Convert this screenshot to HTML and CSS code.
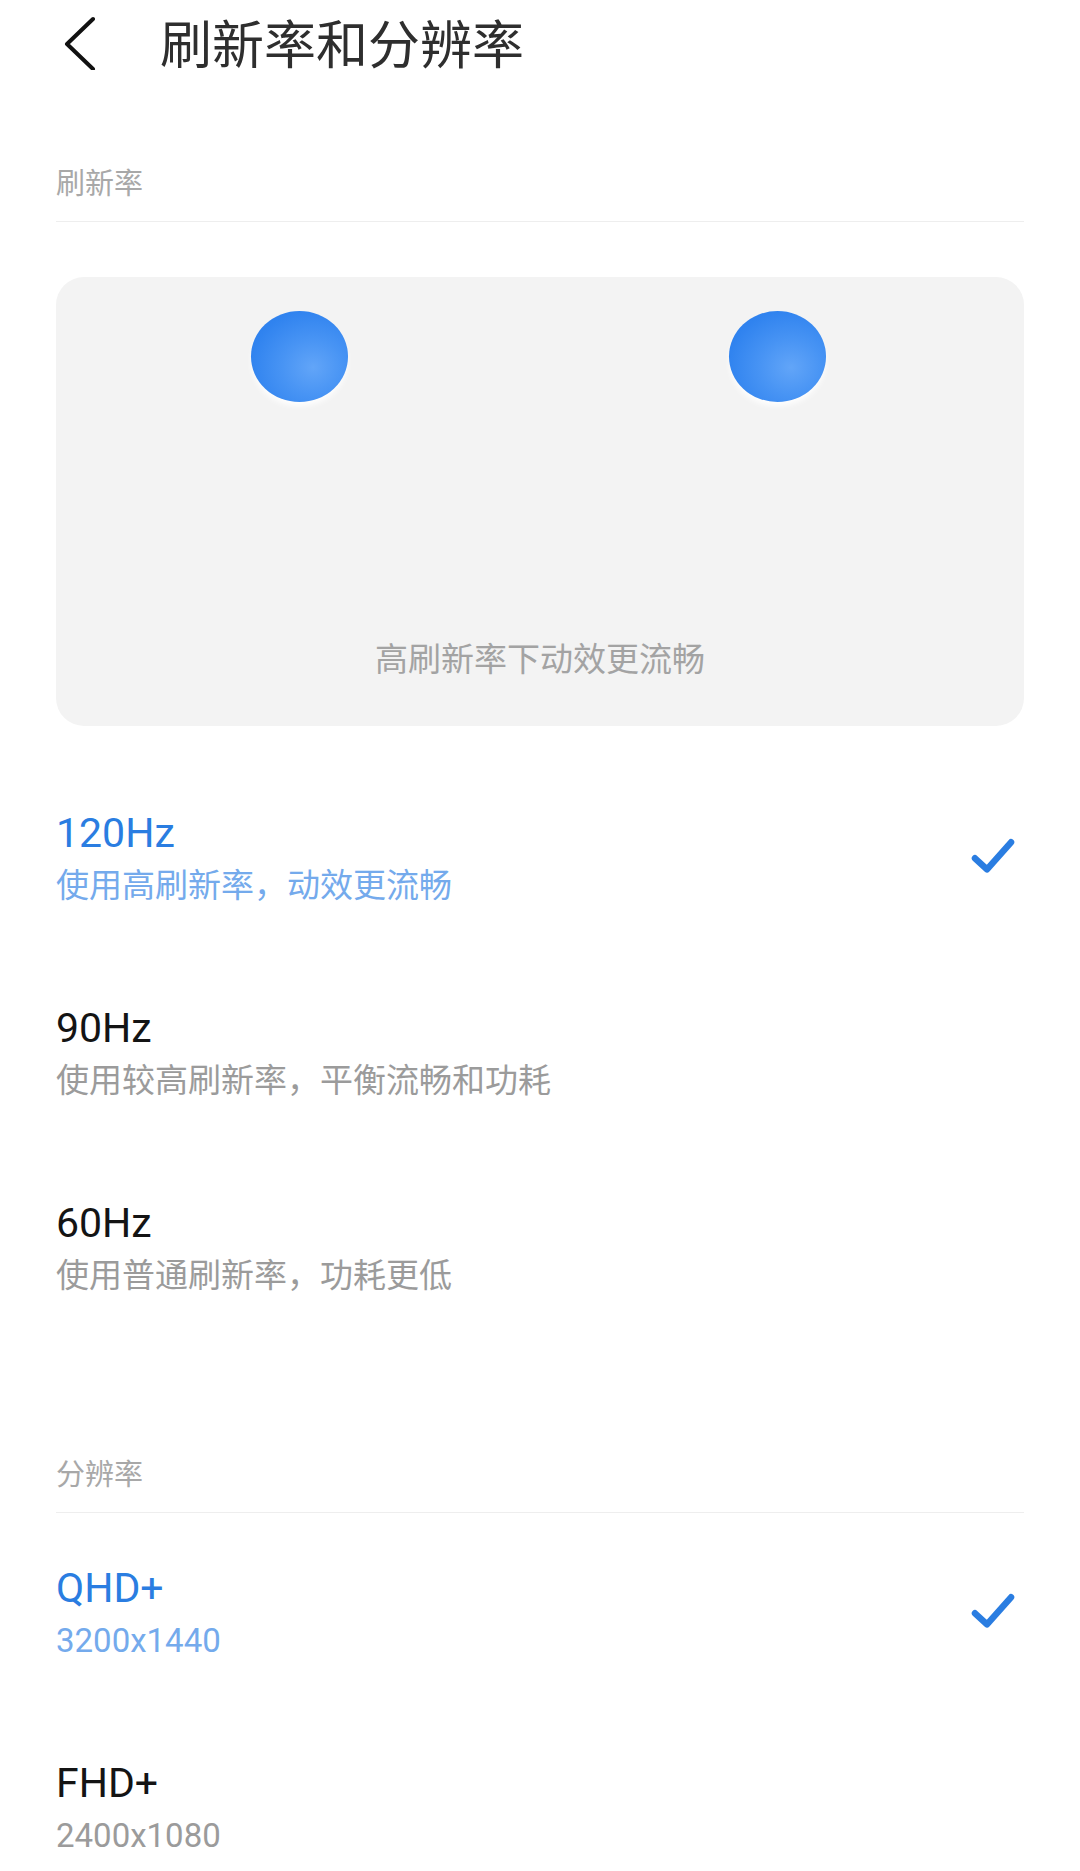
FILE: index.html
```html
<!DOCTYPE html>
<html lang="zh-CN">
<head>
	<meta charset="UTF-8">
	<title>刷新率和分辨率</title>
	<link rel="stylesheet" href="styles.css">
</head>
<body>
	<header class="topbar">
		<svg class="back" width="48" height="56" viewBox="0 0 48 56">
			<path d="M37 5 L11 30 L37 55" fill="none" stroke="#111" stroke-width="4" stroke-linecap="round" stroke-linejoin="round"/>
		</svg>
		<h1 class="title">刷新率和分辨率</h1>
	</header>

	<div class="group-title">刷新率</div>

	<div class="demo">
		<div class="balls">
			<div class="ball"></div>
			<div class="ball"></div>
		</div>
		<div class="demo-text">高刷新率下动效更流畅</div>
	</div>

	<ul class="list list-rate">
		<li class="row current">
			<div class="opt">
				<div class="opt-title">120Hz</div>
				<div class="opt-sub">使用高刷新率，动效更流畅</div>
			</div>
			<svg class="check" width="50" height="44" viewBox="0 0 50 44">
				<path d="M7 21.3 L19 32.3 L43 5.3" fill="none" stroke="#2a7de1" stroke-width="6.5" stroke-linecap="round" stroke-linejoin="round"/>
			</svg>
		</li>
		<li class="row">
			<div class="opt">
				<div class="opt-title">90Hz</div>
				<div class="opt-sub">使用较高刷新率，平衡流畅和功耗</div>
			</div>
		</li>
		<li class="row">
			<div class="opt">
				<div class="opt-title">60Hz</div>
				<div class="opt-sub">使用普通刷新率，功耗更低</div>
			</div>
		</li>
	</ul>

	<div class="group-title group-res">分辨率</div>

	<ul class="list list-res">
		<li class="row current">
			<div class="opt">
				<div class="opt-title">QHD+</div>
				<div class="opt-sub">3200x1440</div>
			</div>
			<svg class="check" width="50" height="44" viewBox="0 0 50 44">
				<path d="M7 21.3 L19 32.3 L43 5.3" fill="none" stroke="#2a7de1" stroke-width="6.5" stroke-linecap="round" stroke-linejoin="round"/>
			</svg>
		</li>
		<li class="row">
			<div class="opt">
				<div class="opt-title">FHD+</div>
				<div class="opt-sub">2400x1080</div>
			</div>
		</li>
	</ul>
</body>
</html>
```

FILE: styles.css
```css
* {
	padding: 0;
	margin: 0;
	box-sizing: border-box;
}
html {
	overflow: hidden;
}
body {
	padding: 0 56px;
	background: #fff;
	font-family: Roboto, "Noto Sans CJK SC", sans-serif;
}
.topbar {
	height: 83px;
	display: flex;
	align-items: center;
}
.back {
	display: block;
}
.title {
	margin-left: 56px;
	font-family: "Noto Sans CJK SC", sans-serif;
	font-size: 52px;
	font-weight: normal;
	line-height: 60px;
	color: #2e2e2e;
}
.group-title {
	margin-top: 78px;
	padding-bottom: 20px;
	border-bottom: 1px solid #eee;
	font-family: "Noto Sans CJK SC", sans-serif;
	font-size: 29px;
	line-height: 40px;
	color: #a8a8a8;
}
.group-res {
	margin-top: 106px;
}
.demo {
	margin-top: 55px;
	height: 449px;
	padding-top: 34px;
	background: #f3f3f3;
	border-radius: 28px;
}
.balls {
	display: flex;
	gap: 381px;
	padding-left: 195px;
}
.ball {
	width: 97px;
	height: 91px;
	border-radius: 50%;
	background: radial-gradient(ellipse at 64% 62%, #62a5f8 0%, #4894f4 35%, #3083ef 72%, #2b7beb 100%);
	box-shadow: 0 5px 6px -1px rgba(255,255,255,0.95);
}
.demo-text {
	margin-top: 233px;
	font-family: "Noto Sans CJK SC", sans-serif;
	font-size: 33px;
	line-height: 44px;
	text-align: center;
	color: #a3a3a3;
}
.list {
	list-style: none;
	margin-top: 35px;
}
.list-res {
	margin-top: 3px;
}
.row {
	display: flex;
	align-items: center;
	justify-content: space-between;
	padding: 48px 0;
}
.opt-title {
	font-size: 41px;
	line-height: 48px;
	color: #141414;
}
.opt-sub {
	margin-top: 7px;
	font-size: 33px;
	line-height: 44px;
	color: #9b9b9b;
}
.current .opt-title {
	color: #2a7de1;
}
.current .opt-sub {
	color: #74aaec;
}
.check {
	display: block;
	margin-right: 6px;
}
```
